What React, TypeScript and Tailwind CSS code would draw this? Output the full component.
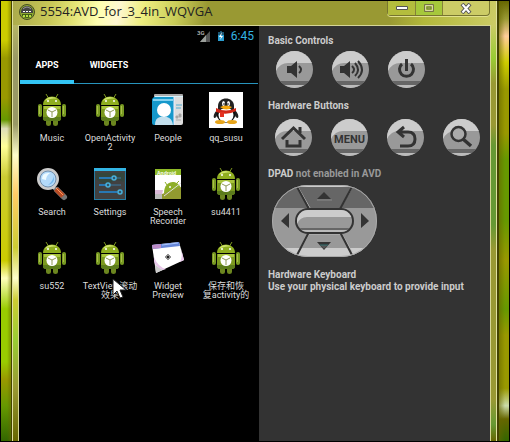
import type { ReactNode } from 'react';

function AndroidIcon() {
  return (
    <svg viewBox="0 0 36 36" className="size-9" aria-hidden="true">
      <path d="M12 2l3 5M24 2l-3 5" stroke="#7f9920" strokeWidth="1" />
      <path d="M9 13C9 1.500 27 1.500 27 13z" fill="#8fae20" />
      <path d="M11 9c2-5 9-5 12-2-4-1-8 0-12 2z" fill="#cfe36c" />
      <circle cx="14" cy="9" r="1" fill="#fff" />
      <circle cx="22" cy="9" r="1" fill="#fff" />
      <rect x="4" y="12" width="4" height="13" rx="2" fill="#789a22" />
      <rect x="28" y="12" width="4" height="13" rx="2" fill="#789a22" />
      <path d="M5.500 14v8M29.500 14v8" stroke="#aabd4a" />
      <path d="M12 26h5v6q0 2-2.500 2T12 32zM19 26h5v6q0 2-2.500 2T19 32z" fill="#6c861f" />
      <path d="M9 14h18v12q0 3-3 3H12q-3 0-3-3z" fill="#7c9a20" />
      <path d="M10 14h16v3H10z" fill="#a8c33c" />
      <path d="M9 25h18v1q0 3-3 3H12q-3 0-3-3z" fill="#5c7c1c" />
      <circle cx="18" cy="20.500" r="5.500" fill="#fff" />
      <path d="M14 18l4 2 4-2M18 20v5" stroke="#8f9a58" fill="none" />
    </svg>
  );
}

function PeopleIcon() {
  return (
    <svg viewBox="0 0 36 36" className="size-9" aria-hidden="true">
      <path d="M4 3q0-1 1-1h27q1 0 1 1v3H4z" fill="#aaa" />
      <path d="M5 4h28v2H5z" fill="#d8f1fa" />
      <path d="M24 5h9v26q0 2-2 2h-7z" fill="#ddd" />
      <path d="M2 7l2-2h20v28H4q-2 0-2-2z" fill="#1598cb" />
      <path d="M3 7h20v2H3z" fill="#83d1ef" />
      <path d="M5 33q0-7 5-8h7q5 1 6 8z" fill="#c3dfed" />
      <circle cx="14" cy="18" r="7" fill="#fff" />
      <path d="M26 13h6M26 16h5" stroke="#54acd0" strokeWidth="1" />
      <path d="M26 24h2v2h-2zM29 22h2v3h-2zM26 28h5" fill="#999" stroke="#aaa" />
      <path d="M24 5v28" stroke="#eef" />
    </svg>
  );
}

function PenguinIcon() {
  return (
    <svg viewBox="0 0 36 36" className="size-9" aria-hidden="true">
      <path d="M1 0h34v36H1z" fill="#fff" />
      <path d="M9 18c-3 3-4 6-3 8 2 0 3-2 3-3zM27 18c3 3 4 6 3 8-2 0-3-2-3-3z" fill="#222" />
      <ellipse cx="18" cy="22" rx="9.500" ry="9" fill="#111" />
      <ellipse cx="18" cy="23" rx="7.500" ry="7.500" fill="#fff" />
      <path d="M10 17V14C10 4 26 4 26 14v3z" fill="#222" />
      <ellipse cx="15.500" cy="11.500" rx="1.500" ry="2.500" fill="#fff" />
      <ellipse cx="20.500" cy="11.500" rx="1.500" ry="2.500" fill="#fff" />
      <circle cx="16" cy="12" r=".8" />
      <circle cx="20" cy="12" r=".8" />
      <path d="M12 15q6-3 12 0-5 5-12 0z" fill="#f5a80c" />
      <path d="M8 16q10 5 20 0v3q-9 5-20 1z" fill="#d22818" />
      <path d="M12 20h4v5h-4z" fill="#e33020" />
      <ellipse cx="12" cy="30" rx="5" ry="2" fill="#e7a51b" />
      <ellipse cx="24" cy="30" rx="5" ry="2" fill="#e7a51b" />
    </svg>
  );
}

function SearchIcon() {
  return (
    <svg viewBox="0 0 36 36" className="size-9" aria-hidden="true">
      <path d="M19 21l4 4" stroke="#ccc" strokeWidth="3" />
      <path d="M23 24l7 7" stroke="#777" strokeWidth="6" strokeLinecap="round" />
      <path d="M22 23l7 7" stroke="#b84b24" strokeWidth="5" />
      <path d="M22 22l7 7" stroke="#ff9860" />
      <circle cx="14" cy="13" r="9.500" fill="#b3dafa" stroke="#ccc" strokeWidth="3" />
      <circle cx="14" cy="13" r="8" fill="none" stroke="#718fae" />
      <path d="M8 13q0-7 8-6-4 3-4 7z" fill="#edfaff" />
      <path d="M14 19q7-1 6-9-1 5-6 9z" fill="#77b9ed" />
    </svg>
  );
}

function SettingsIcon() {
  return (
    <svg viewBox="0 0 36 36" className="size-9" aria-hidden="true">
      <rect x="2.500" y="2.500" width="31" height="31" fill="#414141" stroke="#267da5" />
      <path d="M4 7h28v9q-8-4-12 0-7 4-16-3z" fill="#34463c" />
      <path d="M2 2h32v3H2z" fill="#33b5e5" />
      <path d="M7 12h22M7 19h22M7 26h22" stroke="#3978a3" />
      <path d="M7 12h12M7 19h7M7 26h18" stroke="#2878b4" strokeWidth="2" />
      <g fill="#32566a" stroke="#48b0da" strokeWidth="1.500">
        <circle cx="22" cy="12" r="2" />
        <circle cx="16" cy="19" r="2" />
        <circle cx="28" cy="26" r="2" />
      </g>
    </svg>
  );
}

function SpeechIcon() {
  return (
    <svg viewBox="0 0 36 36" className="size-9" aria-hidden="true">
      <path d="M5 3h26v30H5z" fill="#fff" />
      <path d="M5 3h26v6H5z" fill="#8fba27" />
      <text x="7" y="9" fill="#fff" className="font-['Liberation_Sans'] text-[5px] font-bold">Android</text>
      <path d="M5 24h8l-2 9H5z" fill="#dab9d7" />
      <path d="M5 28h8v5H5z" fill="#bbb" />
      <path d="M14 27C14 13 29 13 31 23v5z" fill="#8eaf29" />
      <path d="M12 28l19-7v12H12z" fill="#929a30" />
      <path d="M17 19l-2-3M26 18l3-3" stroke="#8eaf29" />
      <path d="M14 30l17-13" stroke="#ddd" />
      <circle cx="20" cy="21" r="1" fill="#fff" />
    </svg>
  );
}

function WidgetIcon() {
  return (
    <svg viewBox="0 0 36 36" className="size-9" aria-hidden="true">
      <path d="M2 5l27-3 5 18-28 13z" fill="#fff" />
      <path d="M2 5l27-3 1 4-27 3z" fill="#6686d8" />
      <path d="M2 5l9-1v4l-8 1z" fill="#bd8bc7" />
      <path d="M12 5l16-2" stroke="#a9c6ff" />
      <path d="M5 25l8 5-7 3z" fill="#ccc" />
      <path d="M4 21q1 6 9 9l3-1q-8-2-12-12zM31 8l3 12-4 2q3-6 1-14z" fill="#e7c6e9" />
      <path d="M18 14v6M15 17h6M16.500 15.500l3 3M19.500 15.500l-3 3" stroke="#222" />
    </svg>
  );
}

const apps: { name: ReactNode; icon: ReactNode }[] = [
  { name: 'Music', icon: <AndroidIcon /> },
  { name: <>OpenActivity<br />2</>, icon: <AndroidIcon /> },
  { name: 'People', icon: <PeopleIcon /> },
  { name: 'qq_susu', icon: <PenguinIcon /> },
  { name: 'Search', icon: <SearchIcon /> },
  { name: 'Settings', icon: <SettingsIcon /> },
  { name: <>Speech<br />Recorder</>, icon: <SpeechIcon /> },
  { name: 'su4411', icon: <AndroidIcon /> },
  { name: 'su552', icon: <AndroidIcon /> },
  { name: <>TextView滚动<br />效果</>, icon: <AndroidIcon /> },
  { name: <>Widget<br />Preview</>, icon: <WidgetIcon /> },
  { name: <>保存和恢<br />复activity的</>, icon: <AndroidIcon /> },
];

function TitleBar() {
  return (
    <header className="flex h-6 items-start justify-between bg-[linear-gradient(100deg,#aaa94a_0%,#c9c858_8%,#e4e477_13%,#ffffb0_18%,#fff7d2_22%,#eeee80_27%,#c9cc58_34%,#999933_40%,#999933_78%,#b3b83b_85%,#cccc66_100%)] pl-[6px] pr-[6px]">
      <div className="flex items-center gap-[5px]">
        <svg viewBox="0 0 16 16" className="mt-[2px] size-4" aria-hidden="true">
          <circle cx="8" cy="8" r="7.500" fill="#8fa830" stroke="#444c24" />
          <path d="M2 8C2 0 14 0 14 8v1H2z" fill="#444" />
          <path d="M4 5q4-4 8 0" stroke="#999" fill="none" />
          <path d="M4 7.500h2M7 7.500h2M10 7.500h2" stroke="#fff" />
          <path d="M3 10h10v2q-5 4-10 0z" fill="#425c18" />
          <path d="M4 12h8" stroke="#b7df42" strokeWidth="2" strokeDasharray="2 1" />
        </svg>
        <h1 className="whitespace-nowrap font-['Open_Sans','Noto_Sans',sans-serif] text-[13px] leading-5 text-[#222]">
          5554:AVD_for_3_4in_WQVGA
        </h1>
      </div>
      <div className="flex h-[15px] divide-x divide-[#858238] rounded-b border-x border-b border-[#77752f] bg-[#cccc66] shadow-[0_1px_0_#e2e28e]">
        <button type="button" aria-label="Minimize" className="flex w-7 items-center justify-center bg-[#b4bd3d]">
          <svg viewBox="0 0 12 6" className="h-[6px] w-3"><path d="M.5 1.500h11v3H.5z" fill="#fff" stroke="#555" /></svg>
        </button>
        <button type="button" aria-label="Maximize" disabled className="flex w-[27px] items-center justify-center bg-[#a6c83b]">
          <svg viewBox="0 0 12 10" className="h-[10px] w-3"><path d="M1.500 1.500h9v7h-9zM4 4h4v2H4z" fill="none" stroke="#777447" /><path d="M2.500 2.500h7v5h-7z" fill="none" stroke="#d9d7a4" /></svg>
        </button>
        <button type="button" aria-label="Close" className="flex w-[46px] items-center justify-center">
          <svg viewBox="0 0 12 11" className="h-[11px] w-3"><path d="M2 1l8 9M10 1l-8 9" stroke="#555" strokeWidth="4" /><path d="M2.500 1.500l7 8M9.500 1.500l-7 8" stroke="#fff" strokeWidth="2" /></svg>
        </button>
      </div>
    </header>
  );
}

function StatusBar() {
  return (
    <div className="flex h-[18px] items-center justify-end gap-[6px] pr-[5px]">
      <svg viewBox="0 0 14 14" className="size-[14px]" role="img" aria-label="3G signal">
        <text x="0" y="6" fill="#aaa" className="font-[Roboto] text-[6px] font-bold">3G</text>
        <path d="M13 2v11H3z" fill="#555" />
        <path d="M9 6v7H3z" fill="#9b9f9b" />
      </svg>
      <svg viewBox="0 0 8 12" className="h-3 w-2" role="img" aria-label="Battery charging">
        <path d="M3 1h2v1h2v9H1V2h2z" fill="#1c5672" />
        <path d="M1 5h6v6H1z" fill="#2b9dd0" />
        <path d="M5 2L2 7h2l-1 3 3-4H4z" fill="#fff" />
      </svg>
      <span className="text-xs leading-[18px] text-[#33b5e5]">6:45</span>
    </div>
  );
}

function Phone() {
  return (
    <main className="relative w-[240px] shrink-0 bg-black pt-px text-white">
      <StatusBar />
      <nav className="mx-px mt-[3px] flex h-9 border-b border-[#2794bd] text-[9px] font-bold">
        <button type="button" className="-mb-px w-[54px] border-b-4 border-[#33c5f5] pt-1">APPS</button>
        <button type="button" className="-mb-px w-[70px] border-b-4 border-transparent pt-1">WIDGETS</button>
      </nav>
      <div className="grid grid-cols-4 gap-y-[2px] px-1 pt-2">
        {apps.map((app, i) => (
          <button key={i} type="button" className="flex h-[72px] flex-col items-center">
            {app.icon}
            <span className="mt-[6px] whitespace-nowrap text-[9px] leading-[9px] text-[#ddd]">{app.name}</span>
          </button>
        ))}
      </div>
      <svg viewBox="0 0 15 22" className="absolute left-[93px] top-[252px] h-[22px] w-[15px]" aria-hidden="true">
        <path d="M1 1v16l4-4 3 7 3-1-3-7h6z" fill="#fff" stroke="#222" />
      </svg>
    </main>
  );
}

function RoundButton({ label, children }: { label: string; children: ReactNode }) {
  return (
    <button type="button" aria-label={label} className="size-[37px] overflow-hidden rounded-full">
      <svg viewBox="0 0 37 37" className="size-[37px]" fill="none" stroke="#333" strokeWidth="2.500">
        <path d="M0 0h37v37H0z" fill="#999" stroke="none" />
        <path d="M0 0h37v12H12Q4 12 0 20z" fill="#ccc" stroke="none" />
        <path d="M0 30h37v4H0z" fill="#666" stroke="none" />
        <path d="M0 34h37v3H0z" fill="#bbb" stroke="none" />
        {children}
      </svg>
    </button>
  );
}

function Dpad() {
  return (
    <div className="relative h-[72px] w-[105px]">
      <svg viewBox="0 0 105 72" className="h-[72px] w-[105px]" aria-hidden="true">
        <defs>
          <clipPath id="pad"><rect width="105" height="72" rx="36" /></clipPath>
          <clipPath id="ok"><rect x="25" y="25" width="55" height="22" rx="11" /></clipPath>
        </defs>
        <g clipPath="url(#pad)">
          <path d="M0 0h105v72H0z" fill="#999" />
          <path d="M0 0h105v23H0z" fill="#666" />
          <path d="M0 63h105v9H0z" fill="#ccc" />
          <path d="M27 1h51" stroke="#ccc" strokeWidth="2" />
          <path d="M26 2L38 23M69 22L80 3M36 49h34M37 49L27 67M70 49l10 18" stroke="#bbb" />
          <path d="M24 0l13 24M81 0L68 24M37 47L24 72M68 47l13 25" stroke="#333" strokeWidth="2" />
        </g>
        <rect x=".5" y=".5" width="104" height="71" rx="35.500" fill="none" stroke="#aaa" />
        <rect x="23" y="23" width="59" height="26" rx="13" fill="#333" />
        <g clipPath="url(#ok)">
          <path d="M25 25h55v22H25z" fill="#999" />
          <path d="M25 25h55v7H35q-7 0-10 7z" fill="#ccc" />
          <path d="M25 43h55v2H25z" fill="#666" />
          <path d="M25 45h55v2H25z" fill="#bbb" />
        </g>
        <path d="M52 7l7 7H45zM45 57h14l-7 8zM17 28v15L9 36zM89 28v15l8-7z" fill="#333" />
        <path d="M45 15h15" stroke="#888" />
        <path d="M48 60h8l-4 4z" fill="#555" />
        <path d="M48 60h8" stroke="#327070" />
      </svg>
      <div className="absolute inset-0 grid grid-cols-[24px_1fr_24px] grid-rows-3">
        <button type="button" disabled aria-label="Up" className="col-start-2 row-start-1" />
        <button type="button" disabled aria-label="Left" className="col-start-1 row-start-2" />
        <button type="button" disabled aria-label="Select" className="col-start-2 row-start-2" />
        <button type="button" disabled aria-label="Right" className="col-start-3 row-start-2" />
        <button type="button" disabled aria-label="Down" className="col-start-2 row-start-3" />
      </div>
    </div>
  );
}

function Controls() {
  return (
    <aside className="min-w-0 flex-1 bg-[#333] pl-[9px] pt-[9px] text-[10px] font-bold text-[#ccc]">
      <h2 className="leading-3">Basic Controls</h2>
      <div className="mt-1 flex gap-[19px] pl-2">
        <RoundButton label="Volume down">
          <path d="M11 15h4l6-5v17l-6-5h-4z" fill="#333" stroke="none" />
          <path d="M23 15q4 4 0 7" strokeWidth="2" />
        </RoundButton>
        <RoundButton label="Volume up">
          <path d="M8 15h4l6-5v17l-6-5H8z" fill="#333" stroke="none" />
          <path d="M20 15q4 4 0 7M23 12q6 7 0 13M26 10q8 9 0 17" strokeWidth="2" />
        </RoundButton>
        <RoundButton label="Power">
          <path d="M14 13a7 7 0 1 0 9 0M18.500 8v12" strokeWidth="3" />
        </RoundButton>
      </div>
      <h2 className="mt-3 leading-3">Hardware Buttons</h2>
      <div className="mt-[7px] flex gap-[19px] pl-[7px]">
        <RoundButton label="Home">
          <path d="M7 20L18.500 9 30 20M25 14V8M12 21v6h13v-6" strokeWidth="3" />
        </RoundButton>
        <RoundButton label="Menu">
          <text x="18.500" y="24" textAnchor="middle" fill="#333" stroke="none" className="font-[Roboto] text-[11px] font-bold">MENU</text>
        </RoundButton>
        <RoundButton label="Back">
          <path d="M17 8l-6 5 6 5M11 13h10q7 0 7 7t-7 7h-8" strokeWidth="3" />
        </RoundButton>
        <RoundButton label="Search">
          <circle cx="15.500" cy="15" r="7" fill="#aaa" />
          <path d="M20 20l8 7" strokeWidth="3.500" />
        </RoundButton>
      </div>
      <h2 className="mt-3 leading-3">DPAD <span className="text-[#999]">not enabled in AVD</span></h2>
      <div className="mt-[5px] pl-1"><Dpad /></div>
      <h2 className="mt-3 leading-3">Hardware Keyboard</h2>
      <p className="whitespace-nowrap leading-3">Use your physical keyboard to provide input</p>
    </aside>
  );
}

export default function App() {
  return (
    <div className="flex min-h-screen border border-black bg-[#666600] font-[Roboto,'Noto_Sans_CJK_SC',sans-serif]">
      <div className="w-[10px] shrink-0 bg-[linear-gradient(90deg,transparent_60%,#66660088),linear-gradient(#cccc00,#cccc00_9%,#999900_13%,#999900_22%,#669900_27%,#dedeb8_29%,#ffff99_33%,#cccc33_40%,#cccc00_59%,#ffffbb_63%,#99cc00_70%,#99cc00_82%,#999900_86%,#669900_92%,#336600)]" />
      <div className="flex min-w-0 flex-1 flex-col border-l border-r-2 border-[#444400]">
        <div className="flex flex-1 flex-col border-x border-[#e0e0a0] bg-[linear-gradient(#cccc66,#999966_13%,#999966_28%,#ffffcc_35%,#ffcc66_44%,#cccc33_56%,#ffffcc_63%,#cccc33_68%,#99cc33_77%,#999933_88%,#666600)]">
          <TitleBar />
          <div className="flex flex-1 bg-[linear-gradient(#cccc66,#99cc33_8%,#999933_14%,#999933_24%,#669933_29%,#669933_48%,#999933_54%,#999933_90%,#669933_96%,#666600)] bg-[length:6px_100%] bg-right bg-no-repeat px-[5px]">
            <div className="flex min-w-0 flex-1 border-x border-t border-[#d5d595]">
              <Phone />
              <Controls />
            </div>
          </div>
        </div>
      </div>
      <div className="w-[10px] shrink-0 bg-[linear-gradient(90deg,#66660099,transparent_60%),linear-gradient(#666600,#999933_4%,#ffcc99_8%,#cccc00_14%,#999900_20%,#999900_30%,#669900_36%,#669900_50%,#999900_59%,#669900_70%,#999900_76%,#999900_88%,#ccddaa_92%,#666600_95%,#336600)]" />
    </div>
  );
}
